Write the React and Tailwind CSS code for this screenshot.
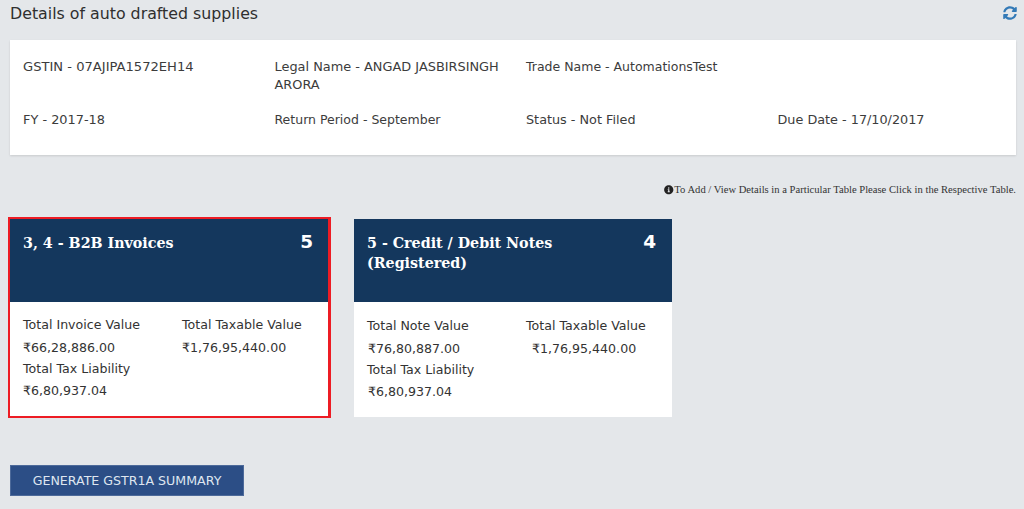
import React from "react";
import { FaSyncAlt, FaInfoCircle } from "react-icons/fa";

const Info = ({ children, size }) => (
  <div className={`w-[251.5px] pl-[13px] pr-[10px] leading-[18px] text-[#3c3c3c] ${size}`}>{children}</div>
);

function Tile({ title, count, outer, body, h1, v1, v1c, h2, h2c, v2, v2c, countC }) {
  return (
    <div className={outer}>
      <div className="h-[83px] bg-[#14375d] pl-[13px] pr-[14px] pt-[14px] flex justify-between items-start text-white font-bold">
        <div className="w-[200px] text-[14.25px] leading-[20px] [font-family:'DejaVu_Serif',serif]">{title}</div>
        <div className={`mt-[-1px] text-[18.5px] leading-[20px] font-bold ${countC}`}>{count}</div>
      </div>
      <div className={`flex-1 bg-white pl-[13px] text-[12.6px] leading-[22px] text-[#333] ${body}`}>
        <div className="flex mb-[-1px]">
          <div className="w-[159px]">
            <div>{h1}</div>
            <div className={`mt-[1px] ${v1c}`}>{v1}</div>
          </div>
          <div>
            <div>Total Taxable Value</div>
            <div className={`mt-[1px] ${v2c}`}>{v2}</div>
          </div>
        </div>
        <div>Total Tax Liability</div>
        <div className={h2c}>{h2}</div>
      </div>
    </div>
  );
}

export default function App() {
  return (
    <div className="w-[1024px] h-[509px] overflow-hidden bg-[#e4e7ea] [font-family:'DejaVu_Sans',sans-serif]">
      <div className="h-[40px] pl-[10px] pr-[7px] pt-[4px] flex justify-between items-start">
        <div className="text-[15.8px] leading-[20px] text-[#2f2f2f]">Details of auto drafted supplies</div>
        <FaSyncAlt className="mt-[2px] w-[14px] h-[14px] text-[#337ab7]" />
      </div>
      <div className="ml-[10px] w-[1006px] h-[115px] bg-white shadow-[0_1px_2px_rgba(0,0,0,0.12)] pt-[18px]">
        <div className="flex h-[53px]">
          <Info size="text-[13.1px]">GSTIN - 07AJIPA1572EH14</Info>
          <Info size="text-[12.9px]">Legal Name - ANGAD JASBIRSINGH ARORA</Info>
          <Info size="text-[12.5px]">Trade Name - AutomationsTest</Info>
        </div>
        <div className="flex">
          <Info size="text-[12.9px]">FY - 2017-18</Info>
          <Info size="text-[12.5px]">Return Period - September</Info>
          <Info size="text-[12.8px]">Status - Not Filed</Info>
          <Info size="text-[12.8px]">Due Date - 17/10/2017</Info>
        </div>
      </div>
      <div className="mt-[28px] mr-[8px] h-[14px] flex justify-end items-center text-[10.6px] leading-[14px] text-[#333] [font-family:'Liberation_Serif',serif]">
        <FaInfoCircle className="w-[9.5px] h-[9.5px] mr-[0.5px] text-[#222]" />
        <span>To Add / View Details in a Particular Table Please Click in the Respective Table.</span>
      </div>
      <div className="mt-[20px] flex items-start">
        <Tile
          outer="ml-[8px] w-[323px] h-[201px] border-2 border-r-[3px] border-[#ed1c24] flex flex-col"
          body="pt-[12px]"
          title="3, 4 - B2B Invoices"
          count="5"
          countC="mr-[1px]"
          h1="Total Invoice Value"
          v1="₹66,28,886.00"
          v1c=""
          v2="₹1,76,95,440.00"
          v2c=""
          h2="₹6,80,937.04"
          h2c=""
        />
        <Tile
          outer="ml-[23px] mt-[2px] w-[318px] h-[198px] flex flex-col"
          body="pt-[13px]"
          title="5 - Credit / Debit Notes (Registered)"
          count="4"
          countC="mr-[2px]"
          h1="Total Note Value"
          v1="₹76,80,887.00"
          v1c="pl-[1px]"
          v2="₹1,76,95,440.00"
          v2c="pl-[6px]"
          h2="₹6,80,937.04"
          h2c="pl-[1px]"
        />
      </div>
      <button className="block ml-[10px] mt-[47px] w-[234px] h-[31px] pt-[2px] bg-[#2c4e86] border border-[#4d6a9a] text-[#dfe6f0] text-[12.6px]">
        GENERATE GSTR1A SUMMARY
      </button>
    </div>
  );
}
